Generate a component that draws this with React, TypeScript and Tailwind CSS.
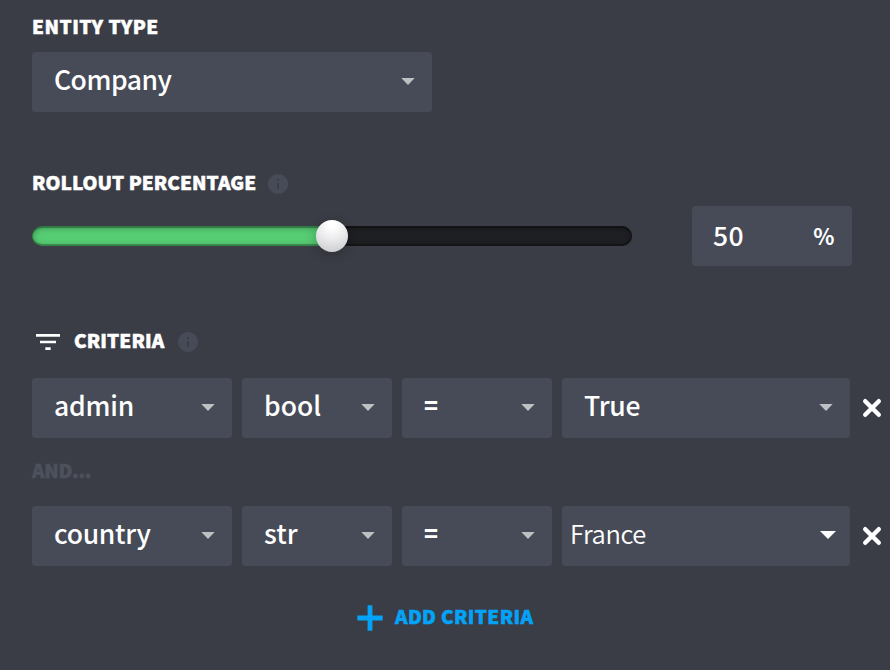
import React from "react";

function Heading({ children, className = "" }: { children: string; className?: string }) {
  return (
    <div className={`h-6 shrink-0 text-[19px] font-black whitespace-nowrap [-webkit-text-stroke:0.5px_currentColor] ${className}`}>
      {children}
    </div>
  );
}

function Caret() {
  return (
    <svg width="14" height="7" viewBox="0 0 14 7" className="mb-0.5 block shrink-0">
      <path d="M.3 0h13.4L7 7z" fill="#bfc0c4" />
    </svg>
  );
}

function Select({ children, className, text = "text-[26.5px]" }: { children: string; className: string; text?: string }) {
  return (
    <div className={`flex h-15 shrink-0 items-center justify-between rounded-[4px] bg-[#474b57] pr-[17px] pl-[22px] ${className}`}>
      <span className={`h-15 leading-[53px] ${text}`}>{children}</span>
      <Caret />
    </div>
  );
}

function Info() {
  return (
    <svg width="24" height="24" viewBox="0 0 24 24" className="block shrink-0">
      <path fill="#474b57" d="M12 2C6.48 2 2 6.48 2 12s4.48 10 10 10 10-4.48 10-10S17.52 2 12 2z" />
      <path fill="#3b3d46" d="M13 17h-2v-6h2v6zm0-8h-2V7h2v2z" />
    </svg>
  );
}

function Remove() {
  return (
    <svg width="20" height="20" viewBox="0 0 20 20" className="ml-3 block shrink-0">
      <path d="M3.2 3.2l13.6 13.6M16.8 3.2L3.2 16.8" stroke="#fff" strokeWidth="4.4" strokeLinecap="round" />
    </svg>
  );
}

export default function App() {
  return (
    <div className="h-[670px] w-[890px] overflow-hidden bg-[#3b3d46] pt-[15px] pl-8 font-['Noto_Sans_CJK_JP','Noto_Sans',sans-serif] font-medium text-white">
      <Heading className="leading-[21px] tracking-[0.5px]">ENTITY TYPE</Heading>
      <Select className="mt-[13px] w-[400px] tracking-[-0.5px]">Company</Select>

      <div className="mt-15 flex h-6 items-center">
        <Heading className="w-[234px] leading-[19px] tracking-[0.05px]">ROLLOUT PERCENTAGE</Heading>
        <Info />
      </div>
      <div className="mt-[10px] flex items-center gap-15">
        <div className="relative h-5 w-[600px] rounded-full bg-[#1e1f23]">
          <div className="h-5 w-[300px] rounded-l-full bg-[#56cc73]" />
          <div className="absolute inset-0 rounded-full shadow-[inset_0_2px_0_rgba(0,0,0,0.25),inset_0_-2px_0_rgba(0,0,0,0.25),inset_0_1px_6px_rgba(0,0,0,0.4)]" />
          <div className="absolute -top-1.5 left-[284px] size-8 rounded-full bg-[radial-gradient(circle_at_50%_15%,#ffffff_10%,#e8e8ea_50%,#c4c5c8_100%)] shadow-[0_2px_12px_rgba(0,0,0,0.25)]" />
        </div>
        <div className="flex h-15 w-40 justify-between rounded-[4px] bg-[#474b57] pr-[18px] pl-[21px]">
          <span className="text-[26.5px] leading-[57px] tracking-[0.3px]">50</span>
          <span className="text-[22px] leading-[58px] font-bold tracking-[-0.5px]">%</span>
        </div>
      </div>

      <div className="mt-16 flex h-6 items-center">
        <svg width="32" height="32" viewBox="0 0 24 24" fill="#fff" className="block shrink-0">
          <path d="M10 18h4v-2h-4v2zM3 6v2h18V6H3zm3 7h12v-2H6v2z" />
        </svg>
        <Heading className="ml-[10px] w-[102px] leading-[19px] tracking-[0.1px]">CRITERIA</Heading>
        <Info />
      </div>
      <div className="mt-6 flex items-center">
        <div className="flex gap-[10px]">
          <Select className="w-[200px] tracking-[-0.2px]">admin</Select>
          <Select className="w-[150px]">bool</Select>
          <Select className="w-[150px] font-black" text="text-[23px]">=</Select>
          <Select className="w-[288px] tracking-[-0.2px]">True</Select>
        </div>
        <Remove />
      </div>
      <Heading className="mt-[21px] leading-[21px] tracking-[-0.3px] text-[#4c515d]">AND...</Heading>
      <div className="mt-[23px] flex items-center">
        <div className="flex gap-[10px]">
          <Select className="w-[200px] tracking-[-0.3px]">country</Select>
          <Select className="w-[150px]">str</Select>
          <Select className="w-[150px] font-black" text="text-[23px]">=</Select>
          <div className="flex h-15 w-[288px] items-center justify-between rounded-[4px] bg-[#474b57] pr-[14px] pl-2">
            <span className="h-15 text-[25.5px] leading-[54px] font-[350] tracking-[-0.4px]">France</span>
            <svg width="16" height="8" viewBox="0 0 16 8" className="mb-0.5 block">
              <path d="M0 0h16L8 8z" fill="#fff" />
            </svg>
          </div>
        </div>
        <Remove />
      </div>
      <div className="mt-[39px] ml-[325px] flex h-[26px] items-center gap-3 text-[#03a4f8]">
        <svg width="26" height="26" viewBox="0 0 26 26" className="block">
          <path d="M13 .3v25.4M.3 13h25.4" stroke="currentColor" strokeWidth="4.8" />
        </svg>
        <Heading className="leading-[19px] tracking-[0.35px]">ADD CRITERIA</Heading>
      </div>
    </div>
  );
}
